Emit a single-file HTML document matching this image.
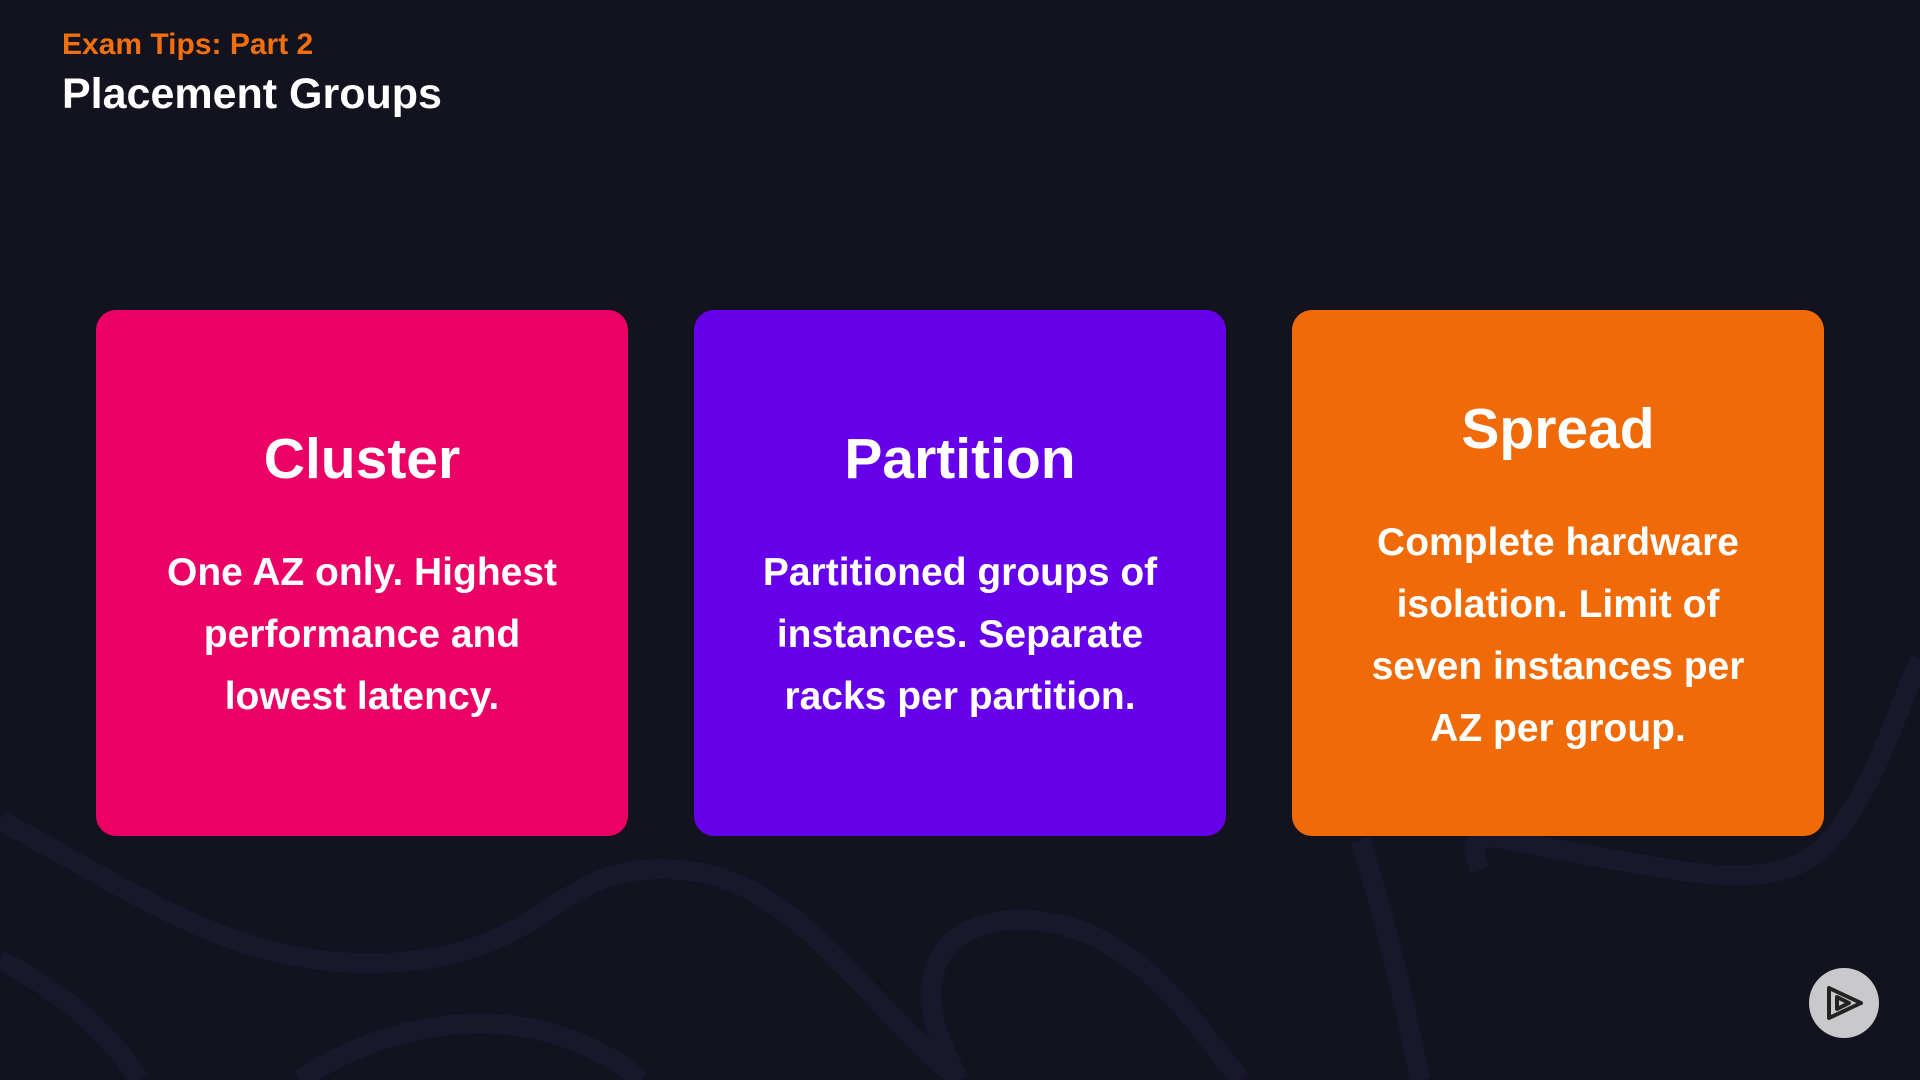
<!DOCTYPE html>
<html><head><meta charset="utf-8"><style>
html,body{margin:0;padding:0;width:1920px;height:1080px;overflow:hidden;background:#13121f;font-family:"Liberation Sans",sans-serif;}
.bg{position:absolute;left:0;top:0}
.h1{position:absolute;left:62px;top:28px;color:#f0700f;font-weight:bold;font-size:30px;}
.h2{position:absolute;left:62px;top:70px;color:#fff;font-weight:bold;font-size:43px;}
.card{position:absolute;top:310px;width:532px;height:526px;border-radius:20px;color:#fff;text-align:center;font-weight:bold;}
.card .t{font-size:57px;margin-bottom:50px}
.card .b{font-size:39px;line-height:62px;padding:0 50px}
.logo{position:absolute;left:1809px;top:968px;width:70px;height:70px;border-radius:50%;background:#c9c9cc;}
</style></head><body>
<svg class="bg" width="1920" height="1080">
<g fill="none" stroke="#19172c" stroke-width="20">
<path d="M0 820 C150 900 250 980 420 960 C560 940 560 860 680 870 C800 880 860 1000 960 1080"/>
<path d="M0 960 C80 1000 120 1050 140 1080"/>
<path d="M300 1080 C420 1000 560 1010 640 1080"/>
<path d="M960 1080 C900 980 940 920 1020 920 C1120 920 1180 1000 1240 1080"/>
<path d="M1360 840 C1380 900 1400 980 1420 1080"/>
<path d="M1480 870 C1460 820 1500 840 1560 850 C1680 870 1780 900 1830 840 C1880 780 1900 700 1920 660"/>
</g>
</svg>
<div class="h1">Exam Tips: Part 2</div>
<div class="h2">Placement Groups</div>
<div class="card" style="left:96px;background:#eb0066"><div style="padding-top:116px"><div class="t">Cluster</div><div class="b">One AZ only. Highest performance and lowest latency.</div></div></div>
<div class="card" style="left:694px;background:#6600ea"><div style="padding-top:116px"><div class="t">Partition</div><div class="b">Partitioned groups of instances. Separate racks per partition.</div></div></div>
<div class="card" style="left:1292px;background:#f06a07"><div style="padding-top:86px"><div class="t">Spread</div><div class="b">Complete hardware isolation. Limit of seven instances per AZ per group.</div></div></div>
<div class="logo"><svg width="70" height="70" viewBox="0 0 70 70"><g fill="none" stroke="#222" stroke-width="4" stroke-linejoin="round"><path d="M20 20 L52 35 L20 50 Z"/><path d="M28 29 L40 35 L28 41 Z"/></g></svg></div>
</body></html>
